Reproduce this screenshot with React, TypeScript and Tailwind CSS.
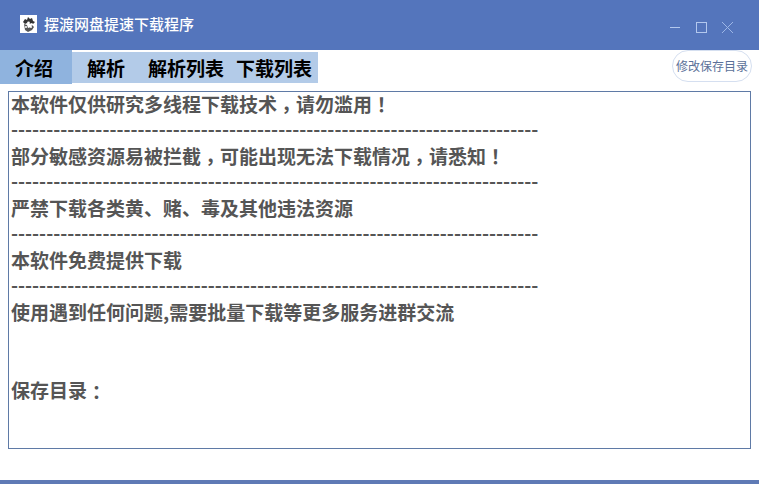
const cjk = { fontFamily: '"Noto Sans CJK SC", "Liberation Sans", sans-serif' };
const tc = { fontFamily: '"Noto Sans CJK TC", sans-serif' };

const dashes = "-".repeat(75);

function Logo() {
  return (
    <svg width="17" height="18" viewBox="0 0 17 18" className="shrink-0">
      <rect width="17" height="18" fill="#fff" />
      <path d="M3 7l2-3 2 1 1-3 2 2 2-1 1 3 2 1-2 2-1-1-3 1-2-1-2 1z" fill="#333" />
      <path d="M4 9l3 1 1 3 3-1 1-2 2 2-2 3-4 2-3-2z" fill="#555" />
      <circle cx="8.5" cy="8" r="1.4" fill="#fff" />
      <circle cx="6" cy="12" r="1" fill="#fff" />
      <circle cx="11" cy="12" r="1" fill="#fff" />
    </svg>
  );
}

function Line({ children }: { children: React.ReactNode }) {
  return <div className="h-[26px] leading-[26px] whitespace-pre">{children}</div>;
}

function DashLine() {
  return <div className="h-[26px] leading-[22px] whitespace-pre">{dashes}</div>;
}

function Comma() {
  return <span style={tc} className="inline-block translate-y-[5px]">，</span>;
}

function Bang() {
  return <span style={tc}>！</span>;
}

function Colon() {
  return <span style={tc} className="inline-block translate-y-[2px]">：</span>;
}

export default function App() {
  return (
    <div className="w-[759px] h-[484px] bg-white flex flex-col overflow-hidden" style={cjk}>
      <header className="h-[50px] shrink-0 bg-[#5475bc] flex items-center pl-[20px] pr-[25px]">
        <div className="-mt-[2px]"><Logo /></div>
        <span className="ml-[7px] -mt-[4px] text-white text-[15px] font-medium leading-none">摆渡网盘提速下载程序</span>
        <div className="ml-auto flex items-center gap-[15px] mt-[5px]">
          <svg width="11" height="11" viewBox="0 0 11 11" fill="none" stroke="#b3c8ee" strokeWidth="1">
            <path d="M0 5.5h10" />
          </svg>
          <svg width="11" height="11" viewBox="0 0 11 11" fill="none" stroke="#b3c8ee" strokeWidth="1">
            <rect x="0.5" y="0.5" width="10" height="10" />
          </svg>
          <svg width="13" height="13" viewBox="0 0 13 13" fill="none" stroke="#9db6e6" strokeWidth="1" className="-ml-[1px]">
            <path d="M1 1l11 11M12 1L1 12" />
          </svg>
        </div>
      </header>

      <div className="h-[35px] shrink-0 flex items-start justify-between pl-0 pr-[7px]">
        <nav className="flex h-[31px] mt-[2px] bg-[#b3cbe8] text-[19px] font-bold text-black items-start leading-[32px] w-[318px]">
          <span className="w-[72px] h-[34px] -mt-[2px] pt-[2px] bg-[#8fb3de] pl-[15px]">介绍</span>
          <span className="ml-[15px]">解析</span>
          <span className="ml-[23px]">解析列表</span>
          <span className="ml-[12px]">下载列表</span>
        </nav>
        <button className="w-[80px] h-[32px] rounded-full border border-[#d5dff0] bg-white text-[#5b7199] text-[12px] leading-none">
          修改保存目录
        </button>
      </div>

      <main className="mx-[8px] mt-[6px] h-[358px] border border-[#5f7aa6] pl-[2px] text-[#555555] text-[19px] font-bold">
        <div className="-mt-[1px]">
          <Line>本软件仅供研究多线程下载技术<Comma />请勿滥用<Bang /></Line>
          <DashLine />
          <Line>部分敏感资源易被拦截<Comma />可能出现无法下载情况<Comma />请悉知<Bang /></Line>
          <DashLine />
          <Line>严禁下载各类黄、赌、毒及其他违法资源</Line>
          <DashLine />
          <Line>本软件免费提供下载</Line>
          <DashLine />
          <Line>使用遇到任何问题,需要批量下载等更多服务进群交流</Line>
          <Line> </Line>
          <Line> </Line>
          <Line>保存目录<Colon /></Line>
        </div>
      </main>

      <div className="flex-1" />
      <div className="h-[4px] shrink-0 bg-[#5f7ab5]" />
    </div>
  );
}
